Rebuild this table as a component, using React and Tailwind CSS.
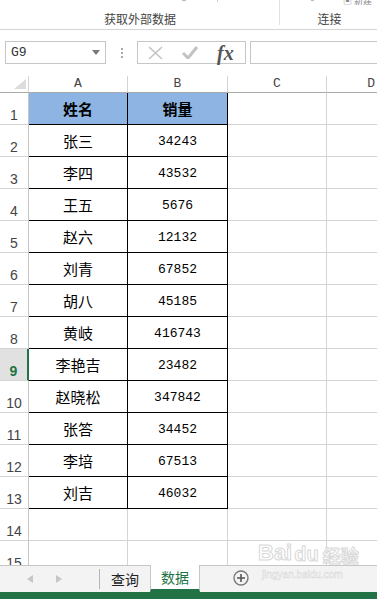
import React from 'react';

const rows = [
  ['张三', '34243'],
  ['李四', '43532'],
  ['王五', '5676'],
  ['赵六', '12132'],
  ['刘青', '67852'],
  ['胡八', '45185'],
  ['黄岐', '416743'],
  ['李艳吉', '23482'],
  ['赵晓松', '347842'],
  ['张答', '34452'],
  ['李培', '67513'],
  ['刘吉', '46032'],
];

const cjk = { fontFamily: '"Noto Sans CJK SC", "Liberation Sans", sans-serif' };
const mono = { fontFamily: '"Liberation Mono", "Noto Sans CJK SC", monospace' };
const sans = { fontFamily: '"Liberation Sans", "Noto Sans CJK SC", sans-serif' };

const RowHead = ({ n, active }) => (
  <div
    className={
      'w-[29px] shrink-0 flex items-end justify-center pb-[2px] text-[14px] leading-none border-b border-[#d4d4d4] ' +
      (active
        ? 'bg-[#e1e1e1] text-[#217346] font-bold border-r-2 border-r-[#217346]'
        : 'bg-white text-[#444] border-r border-r-[#c6c6c6]')
    }
    style={sans}
  >
    {n}
  </div>
);

const GridRow = ({ n, cells, header }) => {
  const table = cells !== undefined;
  return (
    <div className="flex h-[32px] shrink-0">
      <RowHead n={n} active={n === 9} />
      <div
        className={
          'w-[99px] shrink-0 flex items-center justify-center pt-[2px] text-[15px] border-r border-b ' +
          (table ? 'border-black ' : 'border-[#d4d4d4] ') +
          (header ? 'bg-[#8db4e2] font-bold text-black' : 'text-black')
        }
        style={cjk}
      >
        {table ? cells[0] : ''}
      </div>
      <div
        className={
          'w-[100px] shrink-0 flex items-center justify-center pt-[2px] border-r border-b ' +
          (table ? 'border-black ' : 'border-[#d4d4d4] ') +
          (header ? 'bg-[#8db4e2] font-bold text-black text-[15px]' : 'text-black text-[13px]')
        }
        style={header ? cjk : mono}
      >
        {table ? cells[1] : ''}
      </div>
      <div className="w-[99px] shrink-0 border-r border-b border-[#d4d4d4]" />
      <div className="flex-1 border-b border-[#d4d4d4]" />
    </div>
  );
};

export default function App() {
  return (
    <div className="w-[377px] h-[599px] flex flex-col bg-white overflow-hidden relative" style={cjk}>
      {/* ribbon bottom */}
      <div className="h-[30px] shrink-0 flex border-b border-[#d5d5d5] relative">
        <div className="w-[280px] shrink-0 flex items-end justify-center text-[12px] leading-[16px] pb-[2px] text-[#444]">
          获取外部数据
        </div>
        <div className="flex-1 flex items-end justify-center text-[12px] leading-[16px] pb-[2px] text-[#444] pl-[2px]">
          连接
        </div>
        <div className="absolute left-[279px] top-0 w-px h-[25px] bg-[#e1e1e1]" />
        <div className="absolute left-[182px] top-0 w-[4px] h-px bg-[#bbb]" />
        <div className="absolute left-[217px] top-0 w-px h-[2px] bg-[#ccc]" />
        <div className="absolute left-[311px] top-0 w-[3px] h-px bg-[#bbb]" />
        <div className="absolute left-[343px] top-[-4px] text-[9px] text-[#888] leading-none">▣ 新建</div>
      </div>

      {/* formula bar */}
      <div className="h-[46px] shrink-0 flex items-start pt-[11px] pl-[5px]">
        <div className="w-[101px] h-[23px] border border-[#c6c6c6] flex items-center justify-between pl-[5px] pr-[5px]">
          <span className="text-[13px] text-[#333]" style={mono}>G9</span>
          <svg width="8" height="5" viewBox="0 0 8 5"><path d="M0 0h8L4 5z" fill="#7a7a7a" /></svg>
        </div>
        <div className="w-[31px] h-[23px] flex flex-col items-center justify-center gap-[2px]">
          <div className="w-[2px] h-[2px] bg-[#aaa]" />
          <div className="w-[2px] h-[2px] bg-[#aaa]" />
          <div className="w-[2px] h-[2px] bg-[#aaa]" />
        </div>
        <div className="w-[109px] h-[23px] border border-[#c6c6c6] flex items-center pl-[10px] gap-[19px]">
          <svg width="15" height="14" viewBox="0 0 15 14">
            <path d="M1 1l13 12M14 1L1 13" stroke="#c3c3c3" strokeWidth="1.6" fill="none" />
          </svg>
          <svg width="16" height="13" viewBox="0 0 16 13">
            <path d="M1 7l5 5L15 1" stroke="#c3c3c3" strokeWidth="3" fill="none" />
          </svg>
          <span
            className="text-[20px] italic font-bold text-[#555] leading-none"
            style={{ fontFamily: '"Liberation Serif", serif' }}
          >
            fx
          </span>
        </div>
        <div className="flex-1 h-[23px] ml-[4px] border border-r-0 border-[#c6c6c6]" />
      </div>

      {/* sheet grid */}
      <div className="flex-1 flex flex-col overflow-hidden">
        <div className="flex h-[17px] shrink-0 text-[13px] text-[#444]" style={mono}>
          <div className="w-[29px] shrink-0 border-r border-b border-r-[#d4d4d4] border-b-[#ababab] relative">
            <svg className="absolute left-[14px] top-[3px]" width="12" height="10" viewBox="0 0 12 10">
              <path d="M12 0v10H0z" fill="#dcdcdc" />
            </svg>
          </div>
          <div className="w-[99px] shrink-0 border-r border-b border-r-[#d4d4d4] border-b-[#ababab] flex items-center justify-center">A</div>
          <div className="w-[100px] shrink-0 border-r border-b border-r-[#d4d4d4] border-b-[#ababab] flex items-center justify-center">B</div>
          <div className="w-[99px] shrink-0 border-r border-b border-r-[#d4d4d4] border-b-[#ababab] flex items-center justify-center">C</div>
          <div className="flex-1 border-b border-b-[#ababab] flex items-center justify-end pr-[2px] overflow-hidden">D</div>
        </div>
        <GridRow n={1} cells={['姓名', '销量']} header />
        {rows.map((r, i) => (
          <GridRow key={i} n={i + 2} cells={r} />
        ))}
        <GridRow n={14} />
        <GridRow n={15} />
      </div>

      {/* sheet tabs */}
      <div className="h-[27px] shrink-0 bg-[#f3f3f3] border-t border-[#c6c6c6] flex items-stretch relative">
        <div className="w-[100px] shrink-0 flex items-center pl-[27px] gap-[23px] border-r border-[#b5b5b5] my-[3px]">
          <svg width="6" height="8" viewBox="0 0 6 8"><path d="M6 0v8L0 4z" fill="#c6c6c6" /></svg>
          <svg width="6" height="8" viewBox="0 0 6 8"><path d="M0 0v8l6-4z" fill="#c6c6c6" /></svg>
        </div>
        <div className="w-[50px] flex items-center justify-center text-[14px] text-[#222] pt-[1px]">查询</div>
        <div className="w-[50px] -mt-px bg-white border-x border-[#c6c6c6] border-b-[3px] border-b-[#217346] flex items-center justify-center text-[14px] text-[#217346] pt-[1px]">
          数据
        </div>
        <div className="flex-1 flex items-center pl-[33px] pb-[2px]">
          <svg width="16" height="16" viewBox="0 0 16 16">
            <circle cx="8" cy="8" r="7" fill="none" stroke="#7a7a7a" strokeWidth="1.4" />
            <path d="M8 4v8M4 8h8" stroke="#555" strokeWidth="1.6" />
          </svg>
        </div>
      </div>

      {/* status bar */}
      <div className="h-[7px] shrink-0 bg-[#217346]" />

      {/* watermark */}
      <div className="absolute left-[258px] top-[542px] flex flex-col items-start pointer-events-none">
        <div className="flex items-end leading-none">
          <span className="text-[22px] font-bold text-white" style={{ ...sans, WebkitTextStroke: '1px #d8d8d8' }}>Bai</span>
          <span className="text-[20px] font-bold text-white ml-[2px]" style={{ ...sans, WebkitTextStroke: '1px #d8d8d8' }}>du</span>
          <span className="text-[18px] font-bold text-white ml-[4px]" style={{ WebkitTextStroke: '1px #d8d8d8' }}>经验</span>
        </div>
        <span className="text-[10px] text-white mt-[3px] ml-[4px]" style={{ ...sans, WebkitTextStroke: '0.5px #d8d8d8' }}>jingyan.baidu.com</span>
      </div>
    </div>
  );
}
